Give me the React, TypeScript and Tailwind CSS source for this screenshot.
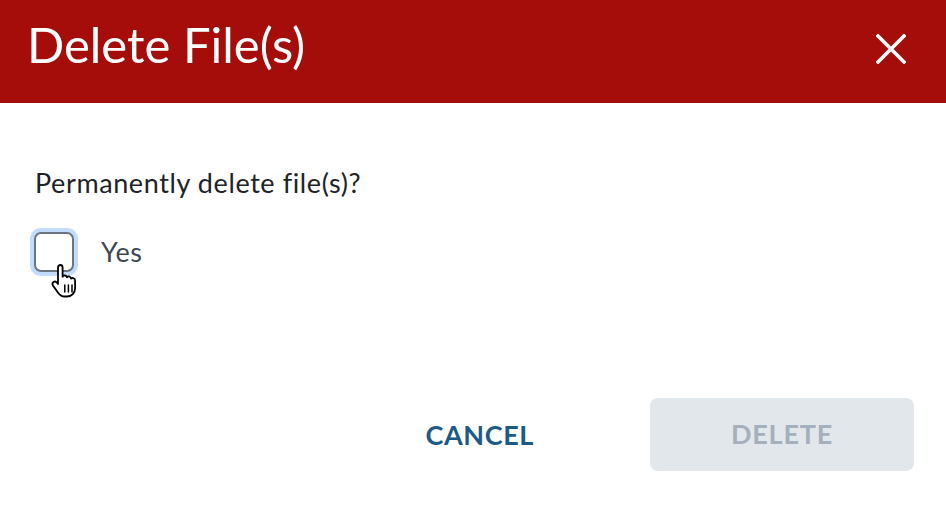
import React from "react";

function HandCursor() {
  return (
    <svg width="30" height="36" viewBox="0 0 30 34" className="absolute left-[14px] top-[29px]">
      <path
        d="M8 3.5c0-1.4 1-2.5 2.3-2.5s2.3 1.1 2.3 2.5v9.2c.5-.9 1.4-1.4 2.4-1.2 1 .1 1.7.9 1.9 1.8.6-.7 1.5-1 2.4-.8 1 .3 1.6 1.1 1.7 2.1.6-.5 1.4-.7 2.2-.5 1.2.3 1.9 1.4 1.9 2.7v7.2c0 4.9-3.3 8.5-8.2 8.5h-2.1c-3 0-5-1.3-6.7-3.8L3 21.6c-.8-1.2-.6-2.7.5-3.5 1.1-.8 2.6-.6 3.4.5L8 20V3.5z"
        fill="#fff"
        stroke="#000"
        strokeWidth="1.8"
        strokeLinejoin="round"
      />
      <path d="M14.8 21v7M18.4 21v7M22 21v7" stroke="#000" strokeWidth="1.5" strokeLinecap="round" />
    </svg>
  );
}

export default function App() {
  return (
    <div className="w-[946px] h-[524px] bg-white font-['Lato','Noto_Sans',sans-serif] flex flex-col">
      {/* Header */}
      <div className="h-[103px] bg-[#a50d0a] flex items-center justify-between pl-[27px] pr-[40px]">
        <h1 className="text-white text-[49px] font-normal leading-none pb-[14px]">Delete File(s)</h1>
        <button className="text-white pb-[6px]">
          <svg width="30" height="30" viewBox="0 0 30 30">
            <path d="M2 2L28 28M28 2L2 28" stroke="#fff" strokeWidth="3.6" strokeLinecap="square" />
          </svg>
        </button>
      </div>

      {/* Body */}
      <div className="px-[35px] pt-[63px] flex flex-col">
        <p className="text-[27px] leading-[34px] text-[#1f2328] tracking-[0.6px]">Permanently delete file(s)?</p>
        <label className="flex items-center gap-[27px] mt-[32px] ml-[-1px]">
          <span className="relative w-[40px] h-[40px] rounded-[7px] border-2 border-[#6b7480] bg-white shadow-[0_0_0_4px_#c4dcfb]">
            <HandCursor />
          </span>
          <span className="text-[27px] text-[#3e4852] tracking-[0.5px]">Yes</span>
        </label>
      </div>

      {/* Actions */}
      <div className="mt-auto mb-[53px] pr-[32px] flex justify-end items-center gap-[116px]">
        <button className="text-[27px] font-bold text-[#1d5a86] tracking-[0.6px] pt-[1px]">CANCEL</button>
        <button className="w-[264px] h-[73px] rounded-[8px] bg-[#e2e7eb] text-[27px] font-bold text-[#a4b0bc] tracking-[0.8px]">
          DELETE
        </button>
      </div>
    </div>
  );
}
